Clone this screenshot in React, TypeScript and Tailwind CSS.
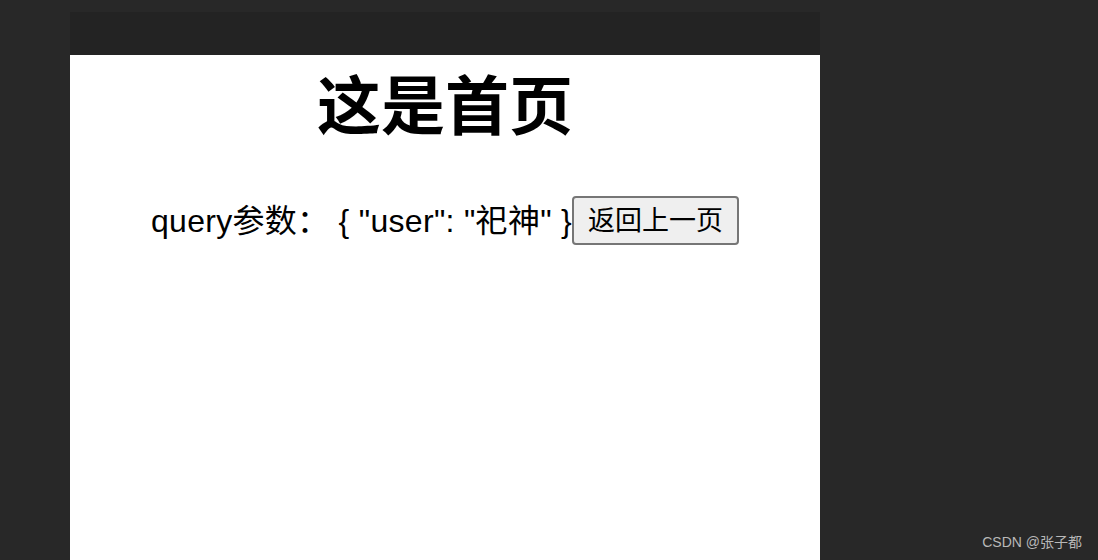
import React from "react";

export default function App() {
  return (
    <div
      className="relative h-[560px] w-[1098px] overflow-hidden bg-[#282828] pl-[70px] pt-[12px]"
      style={{ fontFamily: '"Liberation Sans", "Noto Sans CJK SC", sans-serif' }}
    >
      <div className="flex h-full w-[750px] flex-col">
        <div className="h-[43px] bg-[#232323]" />
        <div className="flex-1 bg-white text-center text-black">
          <h1 className="mt-[12px] text-[64px] font-bold leading-[80px]">这是首页</h1>
          <div className="mt-[49px] flex items-center justify-center text-[32px] leading-[40px]">
            <span className="whitespace-pre tracking-[0.3px]">query参数： {"{"} "user": "祀神" {"}"}</span>
            <button className="h-[49px] rounded-[4px] border-2 border-[#767676] bg-[#efefef] px-[14px] text-[27px] leading-[30px]">
              返回上一页
            </button>
          </div>
        </div>
      </div>
      <div className="absolute bottom-[7px] right-[16px] text-[14px] text-[#b8b8b8]">CSDN @张子都</div>
    </div>
  );
}
